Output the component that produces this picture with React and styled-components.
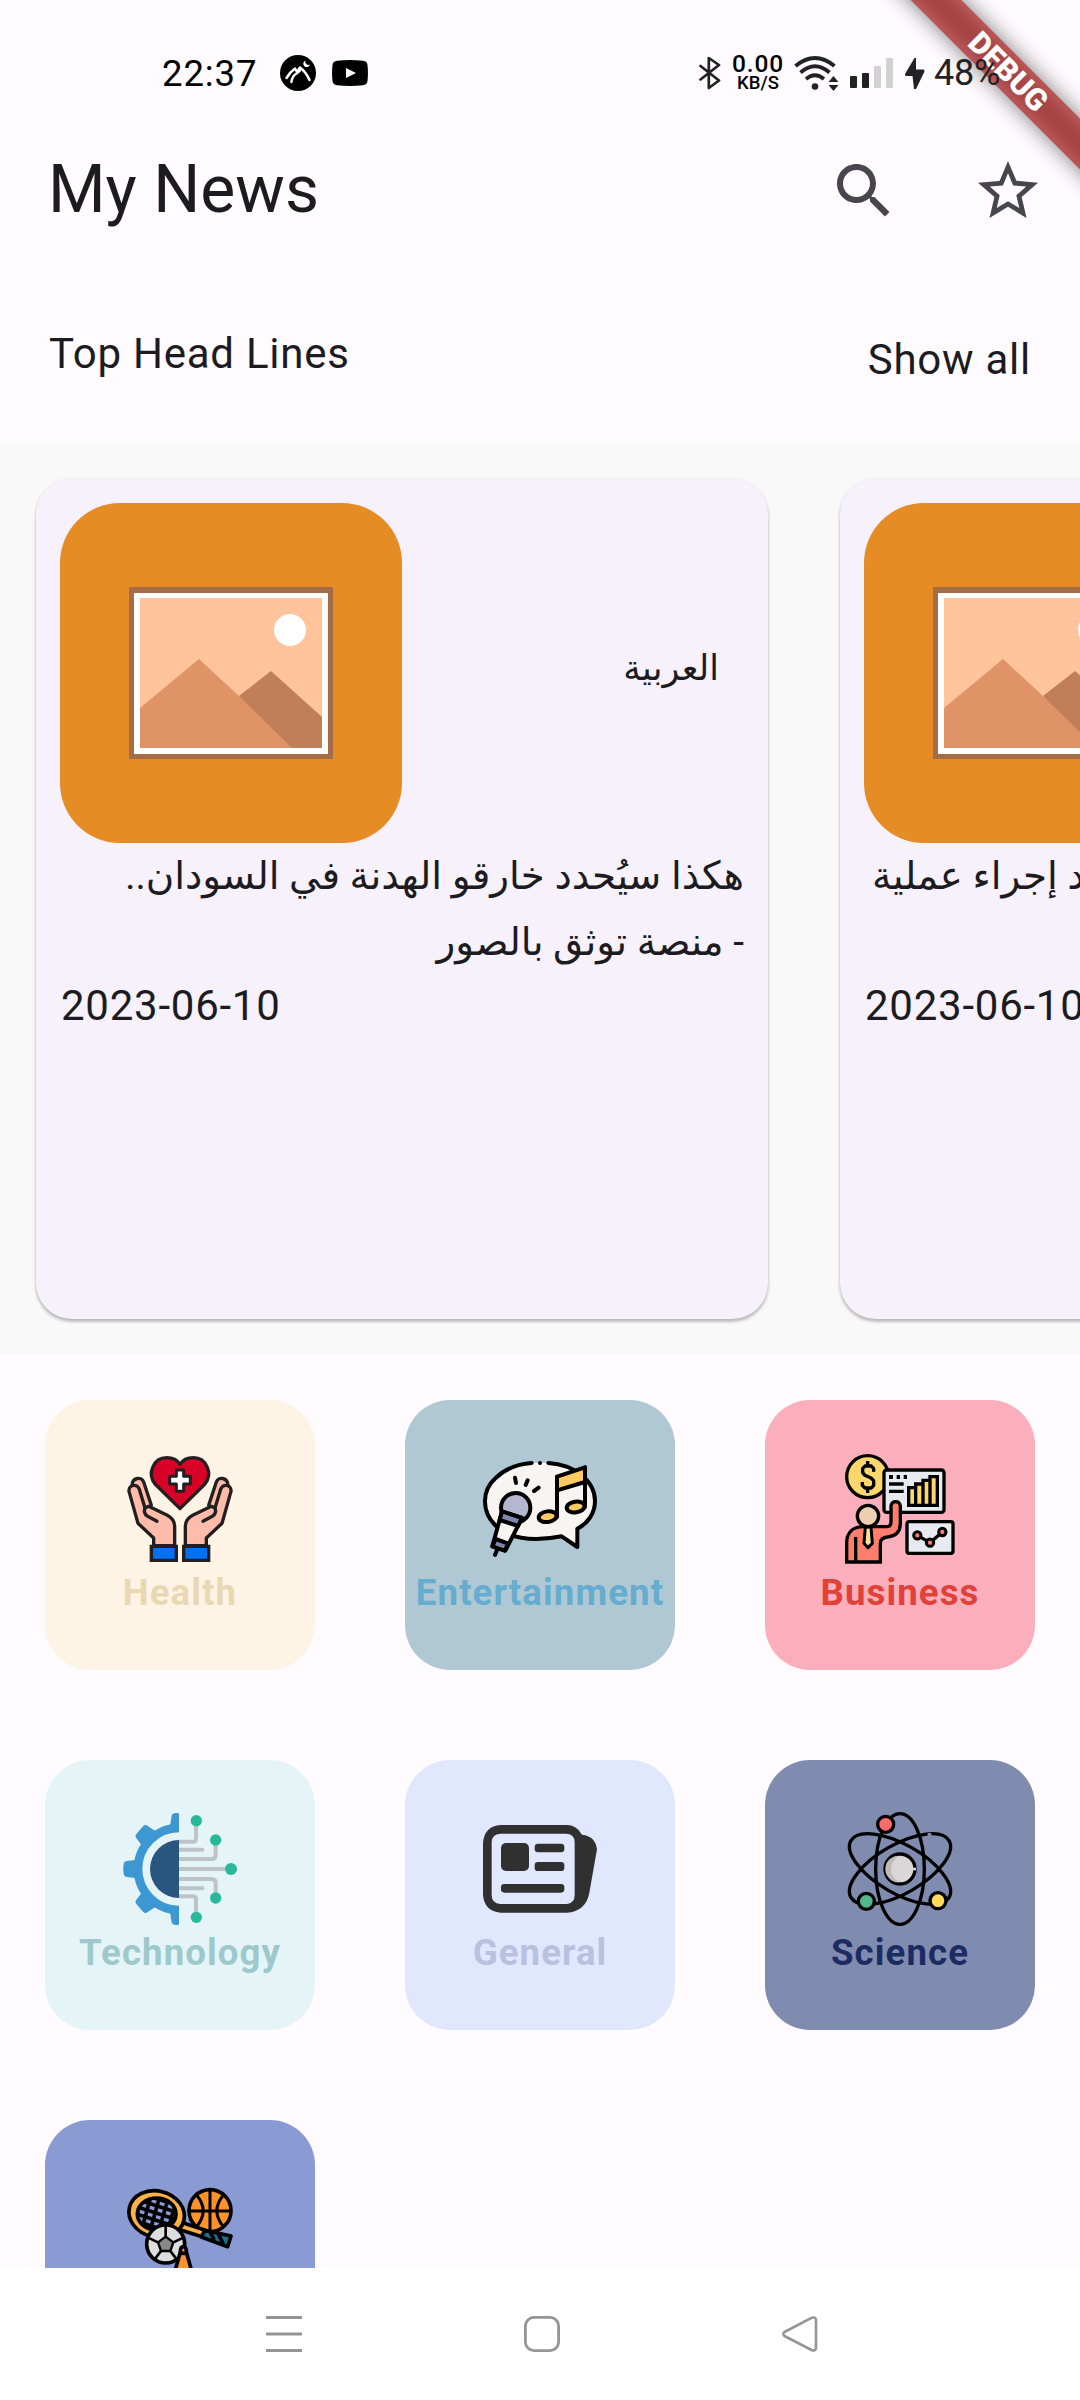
import React from "react";
import styled, { createGlobalStyle } from "styled-components";

const GlobalStyle = createGlobalStyle`
  * { box-sizing: border-box; }
  body { margin: 0; background: #fffbff; }
  svg { display: block; flex: none; }
`;

const Screen = styled.div`
  position: relative;
  width: 1080px;
  height: 2400px;
  overflow: hidden;
  display: flex;
  flex-direction: column;
  background: #fffbff;
  color: #1c1b1f;
  font-family: Roboto, "DejaVu Sans", sans-serif;
`;

const StatusBar = styled.header`
  position: relative;
  z-index: 2;
  height: 107px;
  flex: none;
  display: flex;
  align-items: flex-start;
  justify-content: space-between;
  padding: 51px 78px 0 162px;
  color: #000;
`;
const StatusGroup = styled.div`
  display: flex;
  align-items: center;
  height: 44px;
`;
const Clock = styled.span`
  font-size: 36.5px;
  letter-spacing: 0.9px;
  width: 118px;
  white-space: nowrap;
`;
const NotificationIcons = styled.div`
  display: flex;
  gap: 16px;
  align-items: center;
`;
const NetSpeed = styled.div`
  width: 54px;
  margin: 0 9px 0 10px;
  display: flex;
  flex-direction: column;
  align-items: center;
  font-weight: 500;
`;
const SpeedValue = styled.span`
  font-size: 24.5px;
  line-height: 20px;
  letter-spacing: 0.9px;
`;
const SpeedUnit = styled.span`
  font-size: 18.5px;
  line-height: 18px;
`;
const StatusIcons = styled.div`
  display: flex;
  align-items: center;
  gap: 11px;
`;
const Battery = styled.span`
  width: 68px;
  margin-left: 9px;
  font-size: 36px;
  letter-spacing: -0.2px;
  color: #222;
  white-space: nowrap;
`;

const Ribbon = styled.div`
  position: absolute;
  z-index: 1;
  left: 808px;
  top: 54px;
  width: 400px;
  height: 36px;
  transform: rotate(45deg);
  display: flex;
  align-items: center;
  justify-content: center;
  &::before {
    content: "";
    position: absolute;
    inset: 0;
    background: rgba(0, 0, 0, 0.5);
    filter: blur(11px);
  }
`;
const RibbonLabel = styled.span`
  position: relative;
  width: 100%;
  background: rgba(183, 28, 28, 0.627);
  color: #fff;
  font-size: 30.6px;
  font-weight: 900;
  line-height: 36px;
  text-align: center;
`;

const AppBar = styled.div`
  height: 168px;
  flex: none;
  display: flex;
  align-items: center;
  justify-content: space-between;
  padding: 0 36px 0 48px;
`;
const Title = styled.h1`
  margin: 0;
  padding-bottom: 3px;
  font-size: 66px;
  font-weight: 400;
  line-height: 84px;
`;
const Actions = styled.div`
  display: flex;
  gap: 72px;
`;

const SectionHeader = styled.div`
  height: 168px;
  flex: none;
  display: flex;
  align-items: flex-start;
  justify-content: space-between;
  padding: 49px 49px 0 49px;
  font-size: 42px;
  line-height: 60px;
  letter-spacing: 0.75px;
`;
const ShowAll = styled.span`
  margin-top: 6px;
`;

const Carousel = styled.section`
  height: 911px;
  flex: none;
  display: flex;
  gap: 72px;
  padding: 36px 36px 35px;
  background: #f9f9f9;
  overflow: hidden;
`;
const Card = styled.article`
  width: 732px;
  flex: none;
  padding: 24px;
  border-radius: 36px;
  background: #f6f1fa;
  box-shadow: 0 3px 3px rgba(0, 0, 0, 0.2), 0 1px 4px rgba(0, 0, 0, 0.12);
`;
const CardTop = styled.div`
  display: flex;
  align-items: center;
  justify-content: space-between;
  padding-right: 25px;
`;
const Thumb = styled.div`
  width: 342px;
  height: 340px;
  border-radius: 60px;
  background: #e68c24;
  display: flex;
  align-items: center;
  justify-content: center;
`;
const Source = styled.span`
  font-size: 35px;
  line-height: 60px;
  direction: rtl;
  padding-bottom: 8px;
`;
const Headline = styled.div`
  height: 133px;
  direction: rtl;
  white-space: nowrap;
  text-align: ${(p) => (p.$cut ? "left" : "right")};
  padding-left: ${(p) => (p.$cut ? 8 : 0)}px;
`;
const HeadlineRow = styled.div`
  font-size: 38.8px;
  line-height: 66px;
  text-align: ${(p) => (p.$cut ? "left" : "right")};
`;
const DateLine = styled.div`
  padding-left: 1px;
  font-size: 42px;
  line-height: 60px;
  letter-spacing: 0.75px;
`;

const CategoryGrid = styled.section`
  flex: 1;
  min-height: 0;
  overflow: hidden;
  display: grid;
  grid-template-columns: repeat(3, 270px);
  grid-auto-rows: 270px;
  gap: 90px;
  padding: 46px 45px 0;
`;
const Tile = styled.div`
  border-radius: 45px;
  background: ${(p) => p.$bg};
  display: flex;
  flex-direction: column;
  align-items: center;
  padding-top: 49px;
`;
const TileLabel = styled.span`
  margin-top: 2px;
  font-size: 36.6px;
  font-weight: 700;
  line-height: 44px;
  letter-spacing: 1.1px;
  white-space: nowrap;
  color: ${(p) => p.$color};
`;

const NavBar = styled.nav`
  height: 132px;
  flex: none;
  display: flex;
  align-items: center;
  justify-content: space-between;
  padding: 0 262px 0 265px;
  background: #fff;
`;

const Landscape = () => (
  <svg width="204" height="172" viewBox="129 587 204 172">
    <rect x="129" y="587" width="204" height="172" fill="#a56c48" />
    <rect x="134" y="593" width="194" height="161" fill="#fff" />
    <rect x="140" y="598" width="182" height="150" fill="#ffc49c" />
    <path d="M239 696L271 671L322 717V748H285Z" fill="#c17f59" />
    <path d="M140 708L199 659L239 696L292 748H140Z" fill="#df9367" />
    <circle cx="290" cy="630" r="16" fill="#fff" />
  </svg>
);

const Art = ({ top = 207, children }) => (
  <svg width="120" height="120" viewBox={`270 ${top} 360 360`} fill="none" strokeLinejoin="round">
    {children}
  </svg>
);

const Hand = () => (
  <g stroke="#231f20" strokeWidth="10" strokeLinecap="round" fill="#ffbcab">
    <path d="M306 318C306 290 336 290 341 306L364 376L345 388Z" />
    <path d="M371 497V474L324 430L297 334C295 313 323 310 328 328L345 384L356 379L412 406Q434 418 434 440V497Z" />
    <path d="M345 384Q339 400 353 409L381 424" />
    <path d="M364 499H439V541H364Z" fill="#0070f3" strokeLinejoin="miter" />
  </g>
);
const HealthArt = () => (
  <Art>
    <Hand />
    <g transform="translate(900 0) scale(-1 1)"><Hand /></g>
    <g stroke="#231f20">
      <path d="M450 386L376 313C350 282 370 233 410 233C430 233 443 242 450 253C457 242 470 233 490 233C530 233 550 282 524 313Z" fill="#d80027" strokeWidth="10" />
      <path d="M439 270H461V289H481V312H461V334H439V312H419V289H439Z" fill="#fff" strokeWidth="9" />
    </g>
  </Art>
);

const EntertainmentArt = () => (
  <Art>
    <g stroke="#000" strokeWidth="12" strokeLinecap="round">
      <path d="M475 249C555 254 615 304 615 363C615 399 594 430 562 446V501L515 469C420 488 352 472 318 438C272 394 276 330 317 294C346 266 384 252 425 249" fill="#f8f4f2" />
      <path d="M450 249V249.1" />
      <path d="M375 293L378 309M413 301L407 315M446 323L432 333" />
      <path d="M501 290L585 262V306L501 331Z" fill="#ffcb60" />
      <path d="M501 410V290M585 380V262" />
      <ellipse cx="473" cy="410" rx="27" ry="16" transform="rotate(-8 473 410)" fill="#ffcb60" />
      <ellipse cx="557" cy="381" rx="27" ry="16" transform="rotate(-8 557 381)" fill="#ffcb60" />
      <circle cx="377" cy="383" r="44" fill="#b4b7cf" />
      <path d="M336 394L396 414L346 512L307 499Z" fill="#f8f4f2" />
      <path d="M336 394L396 414L384 438L329 420Z" fill="#8088b1" />
      <path d="M317 477L355 491L344 512L307 499Z" fill="#8088b1" />
      <path d="M321 510L315 525" />
    </g>
  </Art>
);

const BusinessArt = () => (
  <Art>
    <g stroke="#000" strokeWidth="10">
      <circle cx="353" cy="290" r="63" fill="#fbd76c" />
      <path d="M371 275V266L364 258H345L338 266V278L345 286L363 294L371 302V316L364 324H345L337 316V306M353 243V258M353 324V339" strokeWidth="10" />
      <rect x="402" y="270" width="180" height="127" rx="8" fill="#e7ebef" />
      <path d="M417 291H429M440 291H450M461 291H471" strokeWidth="12" />
      <path d="M417 312H461M417 334H461" strokeWidth="10" />
      <path d="M476 323H497V312H519V301H540V290H562V376H476ZM497 323V376M519 312V376M540 301V376" fill="#fbd76c" strokeWidth="10" strokeLinejoin="miter" />
      <path d="M290 546V490C290 458 308 440 340 440H410Q423 440 423 425V378Q425 365 437 365Q449 365 451 378V430Q451 467 413 471Q391 473 391 490V546Z" fill="#ff7f6c" strokeLinejoin="miter" />
      <path d="M317 471V545" />
      <path d="M346 441H363L367 490L354 503L342 490Z" fill="#ffe09a" strokeWidth="9" />
      <circle cx="354" cy="408" r="32" fill="#eecdb2" />
      <rect x="471" y="425" width="138" height="95" rx="7" fill="#e7ebef" />
      <path d="M502 466L540 488L577 456" />
      <g fill="#ff7f6c" strokeWidth="9">
        <circle cx="502" cy="466" r="11" />
        <circle cx="540" cy="488" r="11" />
        <circle cx="577" cy="456" r="11" />
      </g>
    </g>
  </Art>
);

const GearHalf = () => (
  <g>
    <g fill="#3c97d3">
      <path d="M447 192Q447 189 443 189H438Q427 189 425 197L420 228H447Z" />
      <path d="M334 284L317 262Q315 257 319 252L339 229Q346 222 353 228L376 243Z" />
    </g>
    <g stroke="#bdc3c7" strokeWidth="12">
      <path d="M447 275H489Q498 275 498 266V225" />
      <path d="M447 299H517" strokeLinecap="round" />
      <path d="M447 327H545Q557 327 557 315V285" />
    </g>
    <circle cx="499" cy="212" r="17" fill="#29b99a" />
    <circle cx="557" cy="270" r="17" fill="#29b99a" />
  </g>
);
const TechnologyArt = () => (
  <Art top={177}>
    <path d="M447 234A123 123 0 0 0 447 480" stroke="#3c97d3" strokeWidth="26" />
    <path d="M316 330L290 333Q282 334 281 341Q278 357 281 372Q282 379 290 381L316 384Z" fill="#3c97d3" />
    <GearHalf />
    <g transform="translate(0 714) scale(1 -1)"><GearHalf /></g>
    <path d="M447 357H590" stroke="#bdc3c7" strokeWidth="12" />
    <path d="M447 270A87 87 0 0 0 447 444Z" fill="#28567f" />
    <circle cx="603" cy="357" r="18" fill="#29b99a" />
  </Art>
);

const GeneralArt = () => (
  <Art top={177}>
    <g fill="#303030">
      <path fillRule="evenodd" d="M332 225H530Q560 225 576 254Q616 258 621 298L598 428Q588 484 530 488H332Q283 484 279 435V278Q283 229 332 225ZM331 251Q305 253 305 277V436Q305 460 331 462H530Q554 460 554 436V277Q554 253 530 251Z" />
      <rect x="333" y="279" width="84" height="84" rx="15" />
      <rect x="434" y="281" width="89" height="26" rx="10" />
      <rect x="434" y="336" width="89" height="27" rx="10" />
      <rect x="333" y="402" width="190" height="26" rx="10" />
    </g>
  </Art>
);

const ScienceArt = () => (
  <Art top={177}>
    <g stroke="#000" strokeWidth="10">
      <ellipse cx="450" cy="357" rx="73" ry="166" />
      <ellipse cx="450" cy="357" rx="73" ry="170" transform="rotate(60 450 357)" />
      <ellipse cx="450" cy="357" rx="73" ry="170" transform="rotate(-60 450 357)" />
      <path d="M533 258L544 258" stroke="#808bb0" strokeWidth="18" />
      <circle cx="450" cy="357" r="45" fill="#d9d7d8" />
      <path d="M446 317A40 40 0 0 0 446 397Q423 380 423 357Q423 334 446 317Z" fill="#bfbab9" stroke="none" />
      <path d="M489 357L498 357" stroke="#d9d7d8" strokeWidth="8" />
      <circle cx="407" cy="223" r="24" fill="#ff6b6b" />
      <circle cx="349" cy="454" r="24" fill="#54b78c" />
      <circle cx="564" cy="452" r="24" fill="#ffdb5a" />
    </g>
  </Art>
);

const SportsArt = () => (
  <Art>
    <defs>
      <clipPath id="strings"><ellipse cx="380" cy="341" rx="59" ry="49" /></clipPath>
    </defs>
    <g stroke="#000" strokeWidth="11">
      <circle cx="540" cy="332" r="63" fill="#ff932a" />
      <path d="M540 269V395M477 333H603M499 284Q540 332 499 381M581 284Q540 332 581 381" strokeWidth="9" />
      <path d="M440 362L526 391L519 411L440 386Z" fill="#fbb244" />
      <ellipse cx="380" cy="342" rx="84" ry="69" transform="rotate(14 380 342)" fill="#fbb244" />
      <ellipse cx="380" cy="342" rx="58" ry="48" fill="#8a9ad3" />
      <g clipPath="url(#strings)" strokeWidth="11">
        <path d="M338 280L308 390M365 280L332 400M392 280L358 400M419 280L384 400M446 280L410 400" />
        <path d="M310 295L450 340M310 317L450 362M310 339L450 384M320 364L450 406M340 284L450 318" />
      </g>
      <path d="M524 391L603 408L593 440L514 411Z" fill="#206f95" />
      <path d="M539 395L553 420M564 400L580 432" />
      <circle cx="407" cy="432" r="57" fill="#dedede" />
      <path d="M407 410L430 427L421 453H393L384 427Z" fill="#888" strokeWidth="7" />
      <path d="M407 376V410M354 413L384 427M460 413L430 427M421 453L440 478M393 453L374 478" strokeWidth="8" />
      <path d="M451 456Q451 440 460 440Q469 440 469 456L487 520H433Z" fill="#ff932a" />
      <path d="M450 460H470" />
    </g>
  </Art>
);

const PeakIcon = () => (
  <svg width="36" height="36" viewBox="0 0 36 36" fill="none">
    <circle cx="18" cy="18" r="18" fill="#000" />
    <path d="M6.5 23Q10 17 15 13.500L17 17L20 12.500Q26 17 29.500 25M11.500 27Q12 21 16.500 18.500M20 15.500L16.500 18.500" stroke="#fff" strokeWidth="2.5" strokeLinecap="round" strokeLinejoin="round" />
    <path d="M25.500 5.500A3.400 3.400 0 1 0 30 9.500A3.200 3.200 0 0 1 25.500 5.500Z" fill="#fff" />
  </svg>
);
const PlayIcon = () => (
  <svg width="36" height="26" viewBox="0 0 36 26">
    <path d="M5 .8Q18-.6 31 .8Q35 1.2 35.5 5Q36.4 13 35.5 21Q35 24.8 31 25.2Q18 26.6 5 25.2Q1 24.8 .5 21Q-.4 13 .5 5Q1 1.2 5 .8Z" fill="#000" />
    <path d="M14 8L24 13L14 18Z" fill="#fff" />
  </svg>
);
const BluetoothIcon = () => (
  <svg width="22" height="34" viewBox="0 0 22 34" fill="none" stroke="#222" strokeWidth="2.7" strokeLinecap="round" strokeLinejoin="round">
    <path d="M1.5 10L20 24.5L9.8 32V2L20 9L1.5 23.5" />
  </svg>
);
const WifiIcon = () => (
  <svg width="45" height="35" viewBox="0 0 45 35" fill="none" stroke="#222" strokeWidth="3.8">
    <path d="M1.5 10Q21 -6 40.500 10M6.500 16.500Q21 4 35.500 16.500M12 23Q21 15.500 30 23" />
    <circle cx="21" cy="30.500" r="3.300" fill="#222" stroke="none" />
    <path d="M34.500 26L39.500 20L44.500 26ZM34.500 29L39.500 35L44.500 29Z" fill="#222" stroke="none" />
  </svg>
);
const SignalIcon = () => (
  <svg width="44" height="31" viewBox="0 0 44 31">
    <rect x="0" y="18" width="7" height="12" rx="1" fill="#222" />
    <rect x="12" y="15" width="7" height="15" rx="1" fill="#222" />
    <rect x="24" y="8" width="7" height="22" rx="1" fill="#d2d0d2" />
    <rect x="36" y="0" width="7" height="30" rx="1" fill="#d2d0d2" />
  </svg>
);
const BoltIcon = () => (
  <svg width="20" height="31" viewBox="0 0 20 31">
    <path d="M9.500 0L0 16Q-.2 18 1.500 18H7.500L9 31H11L19.500 13.500Q19.500 11.500 18 11.500H11L11 0Z" fill="#222" />
  </svg>
);
const SearchIcon = () => (
  <svg width="72" height="72" viewBox="0 0 24 24" fill="#49454f">
    <path d="M15.5 14h-.79l-.28-.27C15.41 12.59 16 11.11 16 9.5 16 5.91 13.09 3 9.500 3S3 5.910 3 9.500 5.910 16 9.500 16c1.610 0 3.090-.59 4.230-1.570l.27.28v.79l5 4.990L20.490 19l-4.990-5zm-6 0C7.010 14 5 11.990 5 9.500S7.010 5 9.500 5 14 7.010 14 9.500 11.990 14 9.500 14z" />
  </svg>
);
const StarIcon = () => (
  <svg width="72" height="72" viewBox="0 0 24 24" fill="#49454f">
    <path d="M22 9.240l-7.190-.62L12 2 9.190 8.630 2 9.240l5.460 4.730L5.820 21 12 17.270 18.180 21l-1.630-7.030L22 9.240zM12 15.400l-3.760 2.270 1-4.280-3.320-2.880 4.380-.38L12 6.100l1.710 4.040 4.380.38-3.320 2.880 1 4.280L12 15.400z" />
  </svg>
);
const RecentsIcon = () => (
  <svg width="38" height="38" viewBox="0 0 38 38" stroke="#959595" strokeWidth="3">
    <path d="M1 2.500H37M1 19H37M1 35.500H37" />
  </svg>
);
const HomeIcon = () => (
  <svg width="38" height="38" viewBox="0 0 38 38" fill="none" stroke="#959595" strokeWidth="2.800">
    <rect x="2.400" y="2.400" width="33.200" height="33.200" rx="8.500" />
  </svg>
);
const BackIcon = () => (
  <svg width="38" height="38" viewBox="0 0 38 38" fill="none" stroke="#959595" strokeWidth="2.600" strokeLinejoin="round">
    <path d="M4.500 17L31.500 2.800Q35.500 1.500 36 5V33Q35.500 36.500 31.500 35L4.500 21Q2 19 4.500 17Z" />
  </svg>
);

const articles = [
  { source: "العربية", lines: ["هكذا سيُحدد خارقو الهدنة في السودان..", "- منصة توثق بالصور"], date: "2023-06-10" },
  { source: "العربية", lines: ["بعد إجراء عملية"], date: "2023-06-10", cut: true },
];

const categories = [
  { label: "Health", bg: "#fef4e5", color: "#ead8b4", Icon: HealthArt },
  { label: "Entertainment", bg: "#b0c8d4", color: "#65acce", Icon: EntertainmentArt },
  { label: "Business", bg: "#fbaebc", color: "#e14139", Icon: BusinessArt },
  { label: "Technology", bg: "#e4f4f7", color: "#9dc9cd", Icon: TechnologyArt },
  { label: "General", bg: "#e1e7fd", color: "#b8c1df", Icon: GeneralArt },
  { label: "Science", bg: "#808bb0", color: "#1c2c63", Icon: ScienceArt },
  { label: "Sports", bg: "#8a9ad3", color: "#2c3c80", Icon: SportsArt },
];

export default function App() {
  return (
    <Screen>
      <GlobalStyle />
      <StatusBar>
        <StatusGroup>
          <Clock>22:37</Clock>
          <NotificationIcons>
            <PeakIcon />
            <PlayIcon />
          </NotificationIcons>
        </StatusGroup>
        <StatusGroup>
          <BluetoothIcon />
          <NetSpeed>
            <SpeedValue>0.00</SpeedValue>
            <SpeedUnit>KB/S</SpeedUnit>
          </NetSpeed>
          <StatusIcons>
            <WifiIcon />
            <SignalIcon />
            <BoltIcon />
          </StatusIcons>
          <Battery>48%</Battery>
        </StatusGroup>
      </StatusBar>
      <Ribbon>
        <RibbonLabel>DEBUG</RibbonLabel>
      </Ribbon>
      <AppBar>
        <Title>My News</Title>
        <Actions>
          <SearchIcon />
          <StarIcon />
        </Actions>
      </AppBar>
      <SectionHeader>
        <span>Top Head Lines</span>
        <ShowAll>Show all</ShowAll>
      </SectionHeader>
      <Carousel>
        {articles.map((a, i) => (
          <Card key={i}>
            <CardTop>
              <Thumb><Landscape /></Thumb>
              {!a.cut && <Source>{a.source}</Source>}
            </CardTop>
            <Headline $cut={a.cut}>
              {a.lines.map((line) => <HeadlineRow key={line} $cut={a.cut}>{line}</HeadlineRow>)}
            </Headline>
            <DateLine>{a.date}</DateLine>
          </Card>
        ))}
      </Carousel>
      <CategoryGrid>
        {categories.map(({ label, bg, color, Icon }) => (
          <Tile key={label} $bg={bg}>
            <Icon />
            <TileLabel $color={color}>{label}</TileLabel>
          </Tile>
        ))}
      </CategoryGrid>
      <NavBar>
        <RecentsIcon />
        <HomeIcon />
        <BackIcon />
      </NavBar>
    </Screen>
  );
}
